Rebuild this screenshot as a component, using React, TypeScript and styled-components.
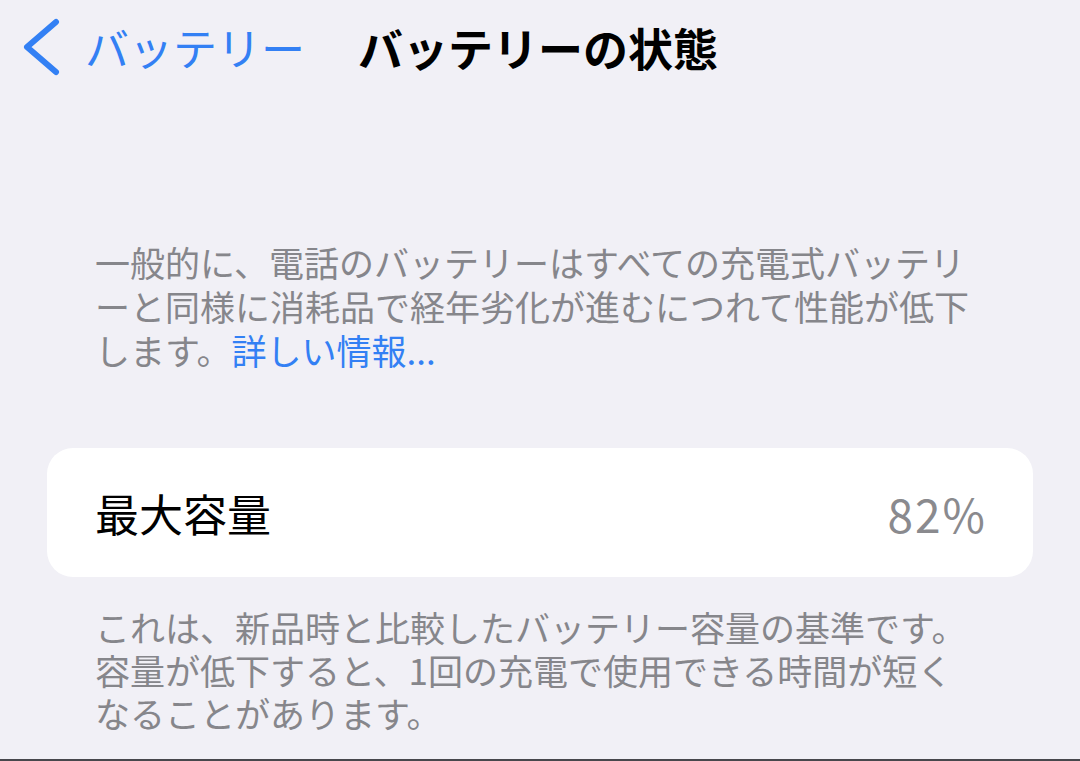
import React from 'react';
import styled, { createGlobalStyle } from 'styled-components';

const GlobalStyle = createGlobalStyle`
	html, body {
		margin: 0;
		padding: 0;
		background: #f1f0f6;
	}
	body {
		font-family: "Noto Sans CJK JP", "Noto Sans", sans-serif;
	}
`;

const Screen = styled.div`
	display: flex;
	flex-direction: column;
	height: 761px;
	box-sizing: border-box;
	border-bottom: 2px solid #47474c;
	background: #f1f0f6;
	overflow: hidden;
`;

const NavBar = styled.div`
	display: flex;
	align-items: center;
	height: 94px;
	padding: 0 0 0 19px;
	box-sizing: border-box;
`;

const BackButton = styled.div`
	display: flex;
	align-items: center;
	gap: 24px;
	color: #3380f4;
	font-size: 44px;
	line-height: 1;
`;

const Title = styled.div`
	margin-left: 53px;
	font-size: 45px;
	font-weight: 700;
	color: #000;
	line-height: 1;
`;

const Content = styled.div`
	display: flex;
	flex-direction: column;
	padding: 146px 47px 0;
`;

const Note = styled.p<{ lh: number }>`
	margin: 0;
	padding: 0 48px;
	font-size: 35px;
	line-height: ${(p) => p.lh}px;
	color: #86868b;
`;

const Link = styled.span`
	color: #3380f4;
`;

const Card = styled.div`
	display: flex;
	align-items: center;
	justify-content: space-between;
	height: 129px;
	margin: 76px 0 28px;
	padding: 0 48px;
	background: #fff;
	border-radius: 26px;
`;

const Label = styled.span`
	font-size: 44px;
	color: #000;
`;

const Value = styled.span`
	font-size: 46px;
	letter-spacing: 2px;
	margin-right: -2px;
	color: #8a8a8e;
`;

const Chevron = () => (
	<svg width="42" height="58" viewBox="0 0 42 58">
		<path d="M37 4 L8 29 L37 54" fill="none" stroke="#3380f4" strokeWidth="6" strokeLinecap="round" strokeLinejoin="round" />
	</svg>
);

const App = (): JSX.Element => (
	<Screen>
		<GlobalStyle />
		<NavBar>
			<BackButton>
				<Chevron />
				<span>バッテリー</span>
			</BackButton>
			<Title>バッテリーの状態</Title>
		</NavBar>
		<Content>
			<Note lh={44}>
				一般的に、電話のバッテリーはすべての充電式バッテリーと同様に消耗品で経年劣化が進むにつれて性能が低下します。<Link>詳しい情報...</Link>
			</Note>
			<Card>
				<Label>最大容量</Label>
				<Value>82%</Value>
			</Card>
			<Note lh={43}>
				これは、新品時と比較したバッテリー容量の基準です。容量が低下すると、1回の充電で使用できる時間が短くなることがあります。
			</Note>
		</Content>
	</Screen>
);

export default App;
